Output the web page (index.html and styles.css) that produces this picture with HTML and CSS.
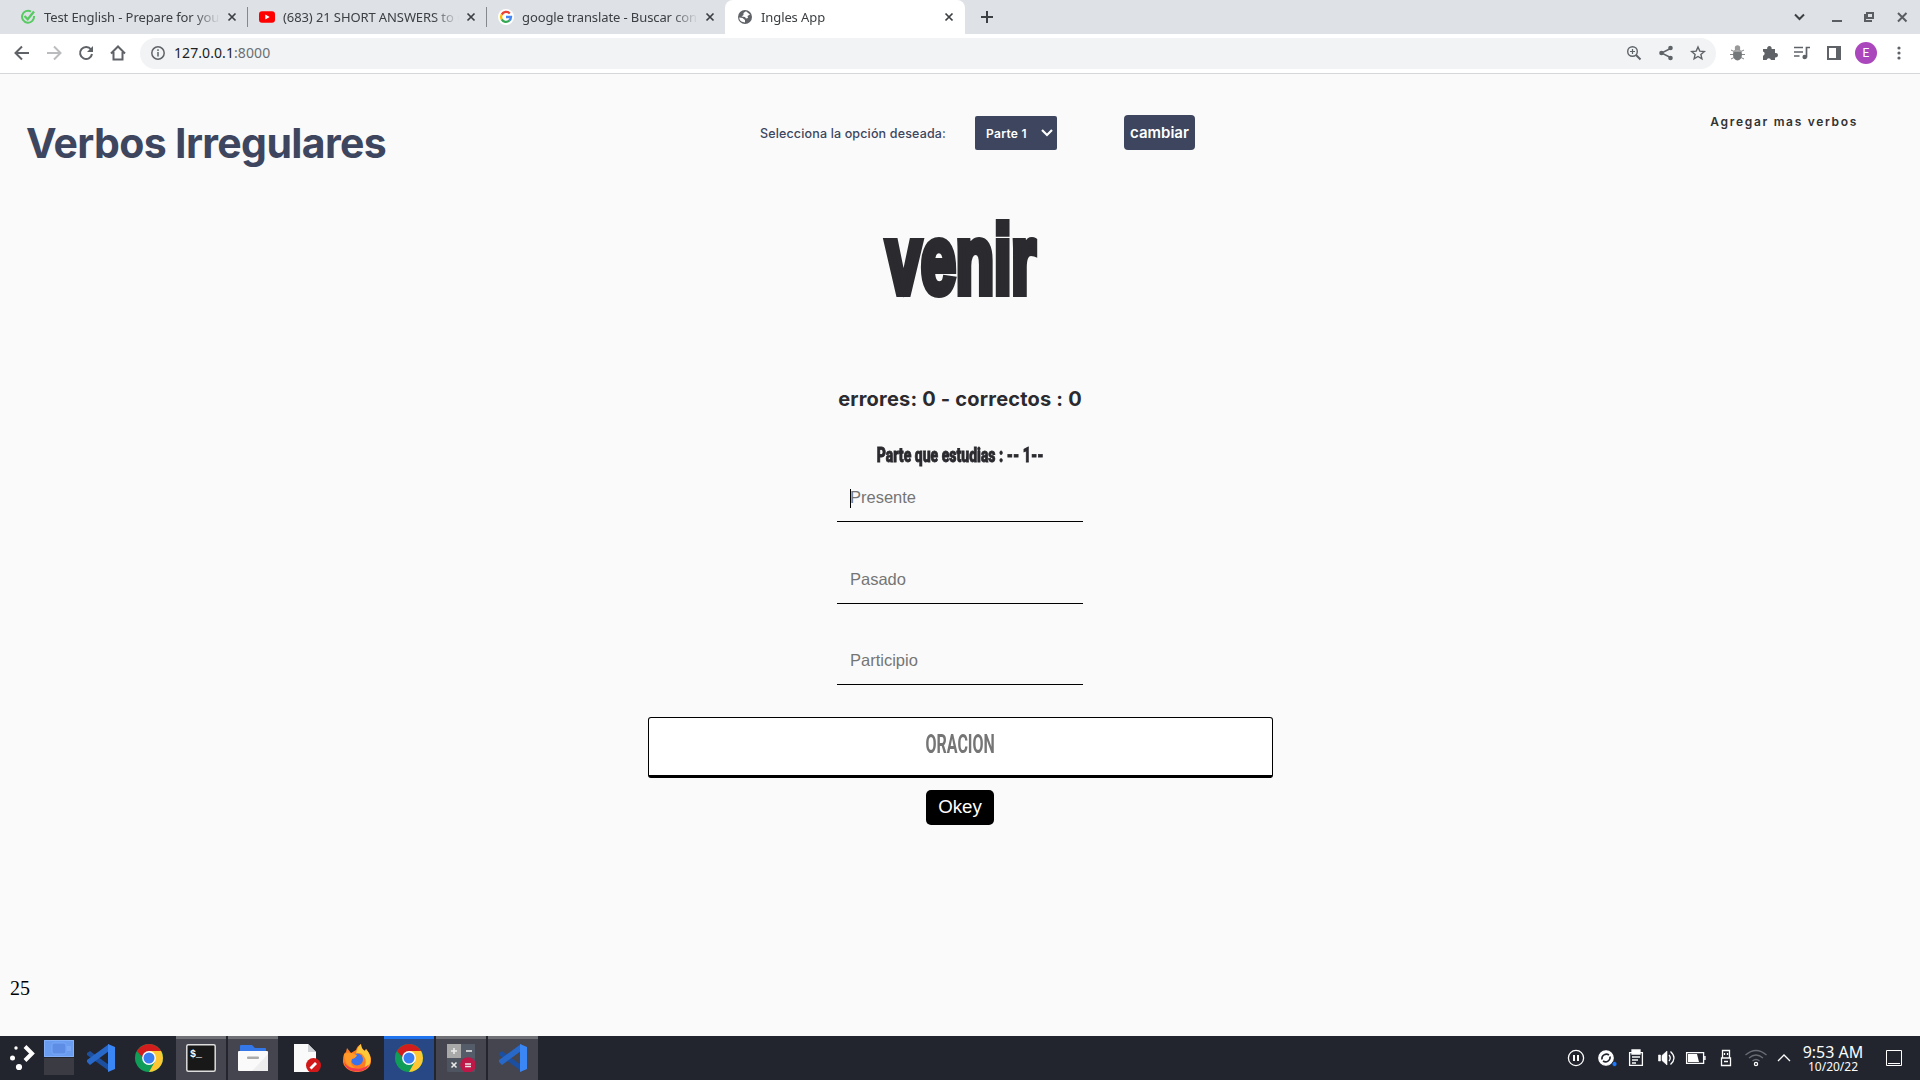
FILE: index.html
```html
<!DOCTYPE html>
<html lang="es">
<head>
<meta charset="utf-8">
<title>Ingles App</title>
<link rel="stylesheet" href="styles.css">
</head>
<body>
<svg class="defs" width="0" height="0">
  <defs>
    <symbol id="x" viewBox="0 0 10 10"><path d="M1.500 1.500l7 7M8.500 1.500l-7 7" stroke="currentColor" stroke-width="1.700" fill="none"/></symbol>
    <symbol id="vscode" viewBox="0 0 28 28"><path d="M0 9l3-2 19 14v6L0 11z" fill="#1c4f9f"/><path d="M0 18l3 3L22 7V0L0 16z" fill="#2868c8"/><path d="M21 0l7 3v22l-7 3z" fill="#3b86f5"/></symbol>
    <symbol id="chrome" viewBox="0 0 28 28"><circle cx="14" cy="14" r="14" fill="#109d58"/><path d="M14 14L1.900 7A14 14 0 0 1 26.100 7z" fill="#d31d1d"/><path d="M14 7h12.100A14 14 0 0 1 14 28l6-10.500z" fill="#ffc832"/><path d="M1.900 7L8 17.500 14 14V7z" fill="#109d58"/><path d="M1.900 7L8 14l6-7z" fill="#d31d1d"/><circle cx="14" cy="14" r="6.900" fill="#fff"/><circle cx="14" cy="14" r="5.500" fill="#3a7df0"/></symbol>
  </defs>
</svg>

<div class="tabs">
  <div class="tab">
    <svg class="fav" viewBox="0 0 16 16"><path d="M14 7a6 6 0 1 1-3-4.500" fill="none" stroke="#57ca62" stroke-width="2"/><path d="M4.500 7l3.200 3.300L14 2.500" fill="none" stroke="#57ca62" stroke-width="2.300"/></svg>
    <span class="tab-text">Test English - Prepare for your e</span><svg class="close"><use href="#x"/></svg>
  </div>
  <div class="tab">
    <svg class="fav" viewBox="0 0 16 16"><rect y="2.300" width="16" height="11.500" rx="3" fill="#f00"/><path d="M6.300 5.500v5l4.400-2.500z" fill="#fff"/></svg>
    <span class="tab-text">(683) 21 SHORT ANSWERS to Qu</span><svg class="close"><use href="#x"/></svg>
  </div>
  <div class="tab tab-last">
    <svg class="fav" viewBox="0 0 16 16"><circle cx="8" cy="8" r="8" fill="#fff"/><g fill="none" stroke-width="2.300"><path d="M11.800 4.500A5 5 0 0 0 3.700 5.600" stroke="#ea4335"/><path d="M3.700 5.500a5 5 0 0 0 0 5" stroke="#fbbc05"/><path d="M3.700 10.400a5 5 0 0 0 7.500 1.300" stroke="#34a853"/><path d="M8 8h5a5 5 0 0 1-1.800 3.700" stroke="#4285f4"/></g></svg>
    <span class="tab-text">google translate - Buscar con G</span><svg class="close"><use href="#x"/></svg>
  </div>
  <div class="tab tab-active">
    <svg class="fav" viewBox="0 0 16 16"><circle cx="8" cy="8" r="7" fill="#5f6368"/><path d="M9 2.200L6.500 4v2L4.500 7.500 8 8l1 1.500L11 9l-.500-2 2.500-1.500M2.200 8.500L5.500 9 8 11v2.500L6 13a5 5 0 0 1-3.800-4.500z" fill="#fff"/></svg>
    <span class="tab-text">Ingles App</span><svg class="close"><use href="#x"/></svg>
  </div>
  <svg class="plus" viewBox="0 0 12 12"><path d="M6 0v12M0 6h12" stroke="#3c4043" stroke-width="2"/></svg>
  <svg class="window-buttons" viewBox="0 0 120 34" fill="none" stroke="#5a5e63" stroke-width="2"><path d="M5 14.500l4.500 4.500 4.500-4.500" stroke="#3c4043"/><path d="M42 21h10"/><path d="M77 13h6v5h-6zM75 14v7h7" /><path d="M108 13l8.500 8.500M116.500 13l-8.500 8.500"/></svg>
</div>

<div class="toolbar">
  <svg class="nav-icons" viewBox="0 0 132 39" fill="none" stroke="#5f6368" stroke-width="2">
    <path d="M29 19H16M22 12.500L15.500 19l6.500 6.500"/><path d="M47 19h13M54 12.500l6.500 6.500-6.500 6.500" stroke="#babcbe"/>
    <path d="M91 15.500A6 6 0 1 0 92 20"/><path d="M93 12v6h-6z" fill="#5f6368" stroke="none"/>
    <path d="M111 19.500l7-7 7 7M113.500 18v7.500h9V18"/>
  </svg>
  <div class="omnibox">
    <svg class="info" viewBox="0 0 14 14" fill="none" stroke="#5f6368" stroke-width="1.500"><circle cx="7" cy="7" r="6.200"/><path d="M7 6v4.500M7 3.300v1.600"/></svg>
    <span class="url">127.0.0.1<i>:8000</i></span>
    <svg class="omni-icons" viewBox="0 0 90 31" fill="none" stroke="#5f6368" stroke-width="1.400">
      <circle cx="12.500" cy="13.500" r="4.800"/><path d="M16 17l4.500 4.500" stroke-width="2"/><path d="M10 13.500h5M12.500 11v5" stroke-width="1.200"/>
      <path d="M50.500 10.500l-9 4.500 9 4.500"/><g fill="#5f6368" stroke="none"><circle cx="50.500" cy="10" r="2.300"/><circle cx="41.500" cy="15" r="2.300"/><circle cx="50.500" cy="20" r="2.300"/></g>
      <path d="M78 9l1.800 4.100 4.500.4-3.400 2.900 1 4.400L78 18.500l-3.900 2.300 1-4.400-3.400-2.900 4.500-.4z"/>
    </svg>
  </div>
  <svg class="ext-icons" viewBox="0 0 128 39">
    <g stroke="#85888a" fill="none"><path d="M9 16l4 2M8 20.500h4M9 25l4-2M22 16l-4 2M23 20.500h-4M22 25l-4-2"/></g><ellipse cx="15.500" cy="20.500" rx="4.500" ry="6" fill="#75787a"/><circle cx="15.500" cy="14" r="2.700" fill="#999"/><path d="M11.500 17h8" stroke="#ccc"/>
    <path d="M41 15h4.200a2.300 2.300 0 1 1 4.400 0H53v4a2.300 2.300 0 1 1 0 4.400V26h-4a2.300 2.300 0 0 0-4.400 0H41v-4.200a2.300 2.300 0 0 0 0-4.400z" fill="#5f6368"/>
    <g stroke="#5f6368" stroke-width="1.700" fill="none"><path d="M72 13.500h9M72 18h9M72 22h5.500M84.500 23.500v-10H88"/></g><circle cx="82.700" cy="23" r="2.300" fill="#5f6368"/>
    <path d="M105 12h14v14h-14zM107 14v10h7V14z" fill-rule="evenodd" fill="#5f6368"/>
  </svg>
  <span class="avatar">E</span>
  <svg class="dots" viewBox="0 0 4 14" fill="#5f6368"><circle cx="2" cy="2" r="1.600"/><circle cx="2" cy="7" r="1.600"/><circle cx="2" cy="12" r="1.600"/></svg>
</div>

<div class="page">
  <header class="header">
    <span class="brand">Verbos Irregulares</span>
    <form class="picker">
      <label class="picker-label">Selecciona la opción deseada:</label>
      <div class="select"><span>Parte 1</span><svg viewBox="0 0 12 8" class="caret-down"><path d="M1 1l5 5 5-5" fill="none" stroke="#fff" stroke-width="2.200"/></svg></div>
      <button type="button" class="change">cambiar</button>
    </form>
    <a class="link">Agregar mas verbos</a>
  </header>
  <main class="quiz">
    <h1 class="verb"><span class="verb-text">venir</span></h1>
    <h3 class="score">errores: 0 - correctos : 0</h3>
    <h4 class="part"><span class="part-text">Parte que estudias : -- 1--</span></h4>
    <div class="field field-focus"><input class="input" placeholder="Presente"></div>
    <div class="field"><input class="input" placeholder="Pasado"></div>
    <div class="field"><input class="input" placeholder="Participio"></div>
    <div class="sentence"><span class="sentence-text">ORACION</span></div>
    <button type="button" class="okey">Okey</button>
  </main>
  <p class="count">25</p>
</div>

<footer class="taskbar">
  <svg class="launcher" viewBox="0 0 44 44" fill="#fff"><circle cx="16" cy="12" r="1.700"/><circle cx="12.500" cy="22" r="2.500"/><circle cx="19" cy="31" r="3.100"/><path d="M25 10.500l7 7-7 7" fill="none" stroke="#fff" stroke-width="4"/></svg>
  <svg class="pager" viewBox="0 0 30 36"><path d="M0 0h30v17H0z" fill="#6a9cf0"/><path d="M.500.500h29v16H.500z" fill="none" stroke="#84b0fa"/><rect x="8" y="3" width="14" height="11" rx="2" fill="#5d8de4" stroke="#79a7f5"/><path d="M23 6h4v5h-4z" fill="#79a7f5"/><path d="M0 18h30v17H0z" fill="#3b3b44"/></svg>
  <div class="app app-vs"><svg class="app-icon"><use href="#vscode"/></svg></div>
  <div class="app app-chrome"><svg class="app-icon"><use href="#chrome"/></svg></div>
  <div class="app open"><svg class="term" viewBox="0 0 30 28"><rect x=".800" y=".800" width="28.400" height="26.400" rx="1.500" fill="#181818" stroke="#ddd" stroke-width="1.500"/><text x="4" y="13" class="term-text">$_</text></svg></div>
  <div class="app open"><svg class="term" viewBox="0 0 30 28"><path d="M2 2q0-1 1-1h11l3 3h10q1 0 1 1v5H2z" fill="#3477e8"/><rect y="7" width="30" height="20" rx="1" fill="#fafafa"/><path d="M30 10v17H14z" fill="#eee"/><rect x="9" y="12.500" width="12" height="2.500" rx="1" fill="#aaa"/></svg></div>
  <div class="app app-file"><svg class="app-icon" viewBox="0 0 28 28"><path d="M1 0h14l8 8v20H1z" fill="#fafafa"/><path d="M15 0l8 8h-8z" fill="#cfd3d8"/><circle cx="20.500" cy="21.500" r="7.500" fill="#d21919"/><path d="M17.500 24.500l5.500-5.500" stroke="#fff" stroke-width="2.800"/></svg></div>
  <div class="app"><svg class="app-icon" viewBox="0 0 28 28"><path d="M4 4l4 5 5-3q1-4 5-6 0 5 4 7l1-2q6 7 5 13a14 11 0 0 1-28-2q0-6 3-8z" fill="#ff7b22"/><path d="M18 0q0 5 4 7l1-2q6 7 4 14-2 5-7 7 6-9-1-16-3-2-6 0 1-7 5-10z" fill="#ffc83a"/><circle cx="14" cy="15.500" r="6" fill="#3a72ee"/><path d="M1 10q5-3 13 1-1 3-5 4-3 6 3 9Q2 24 1 10z" fill="#ff9928"/><path d="M1 18q2 9 13 9.500 9 0 12-7-6 5-13 4-8 0-12-6.500z" fill="#f23c50"/></svg></div>
  <div class="app open active"><svg class="app-icon"><use href="#chrome"/></svg></div>
  <div class="app open"><svg class="app-icon" viewBox="0 0 28 28"><rect width="28" height="28" rx="1.500" fill="#4e5560"/><path d="M0 0h14v14H0z" fill="#a8a8a8"/><path d="M14 0h14v14H14z" fill="#555c69"/><circle cx="21" cy="21" r="7.800" fill="#bd1848"/><path d="M7 4v6M4 7h6M19 7h6M4.500 18.500l5 5M9.500 18.500l-5 5M18 20h6M18 22.500h6" stroke="#e9e9e9" stroke-width="1.600"/></svg></div>
  <div class="app open"><svg class="app-icon"><use href="#vscode"/></svg></div>
  <svg class="tray" viewBox="0 0 240 44" fill="none" stroke="#fcfcfc" stroke-width="1.300">
    <circle cx="16" cy="22" r="7.600"/><path d="M14 19v6M18 19v6" stroke-width="2"/>
    <circle cx="46" cy="22" r="7.200" fill="#fff"/><path d="M42 23.500a4.500 4.500 0 0 1 7-4.500M50 20.500a4.500 4.500 0 0 1-7 4.500" stroke="#22252e" stroke-width="1.600"/><circle cx="54.500" cy="28" r="2.500" fill="#1d7aff" stroke="#22252e" stroke-width=".8"/>
    <path d="M69.600 16.600h12.800v12.800H69.600z"/><path d="M72 14h8v4h-8z" fill="#fff"/><path d="M72 21h8M72 24h6M72 27h4"/>
    <path d="M98.500 19v6h2v-6zM102 19.500v5l5 4.500V15z" fill="#fff" stroke-width=".6"/><path d="M109 19q2.500 3 0 6M110.500 15.500q7 6.500 0 13"/>
    <path d="M126.600 16.600h17v10.800h-17zM145 20v4"/><path d="M128 18h9l2 8h-11z" fill="#fff" stroke="none"/>
    <path d="M162.500 14.500h7V22h-7zM161.500 22h9v7.500h-9zM164 25.500h4M164.500 17v2M167.500 17v2"/>
    <g stroke="#696c73"><path d="M185.500 19q10.500-9 21 0M189 22q7-6 14 0M192.500 25q3.500-3 7 0"/></g><circle cx="196" cy="28" r="1.600"/>
    <path d="M218 25l6-6 6 6"/>
  </svg>
  <div class="clock"><span class="time">9:53 AM</span><span class="date">10/20/22</span></div>
  <svg class="desktop" viewBox="0 0 16 16" fill="none" stroke="#fff"><path d="M.500.500h15v15H.500zM2 13.500h12"/></svg>
</footer>
</body>
</html>
```

FILE: styles.css
```css
* { box-sizing: border-box; }
body {
  margin: 0;
  width: 1920px;
  height: 1080px;
  overflow: hidden;
  display: flex;
  flex-direction: column;
  background: #fafafa;
  font-family: "Noto Sans", sans-serif;
}
svg { flex: none; display: block; }
.defs { position: absolute; }

/* Browser tabs */
.tabs {
  height: 34px;
  flex: none;
  display: flex;
  align-items: center;
  background: #dee1e6;
  padding-left: 9px;
}
.tab {
  width: 239px;
  height: 20px;
  display: flex;
  align-items: center;
  padding-left: 11px;
  border-right: 1px solid #85888c;
  font-size: 13px;
  letter-spacing: -.100px;
  color: #3c4043;
}
.tab-last { width: 238px; border: 0; }
.tab-active {
  width: 240px;
  height: 34px;
  padding-left: 12px;
  background: #fff;
  border: 0;
  border-radius: 8px 8px 0 0;
}
.fav { width: 16px; height: 16px; margin-right: 8px; }
.tab-text {
  width: 176px;
  line-height: 20px;
  overflow: hidden;
  white-space: nowrap;
  mask-image: linear-gradient(90deg, #000 150px, transparent 176px);
}
.close { width: 10px; height: 10px; margin-left: 7px; }
.plus { width: 12px; height: 12px; margin-left: 16px; }
.window-buttons { width: 120px; height: 34px; margin-left: auto; margin-right: 10px; }

/* Address bar */
.toolbar {
  height: 40px;
  flex: none;
  display: flex;
  align-items: center;
  background: #fff;
  border-bottom: 1px solid #d5d8db;
}
.nav-icons { width: 132px; height: 39px; }
.omnibox {
  width: 1576px;
  height: 31px;
  margin-left: 8px;
  border-radius: 16px;
  background: #f1f3f4;
  display: flex;
  align-items: center;
  padding-left: 11px;
}
.info { width: 14px; height: 14px; margin-bottom: 1px; }
.url { margin: 0 0 2px 9px; font-size: 14px; letter-spacing: .080px; color: #202124; }
.url i { font-style: normal; color: #6b6f73; }
.omni-icons { width: 90px; height: 31px; margin-left: auto; margin-right: 6px; }
.ext-icons { width: 128px; height: 39px; margin-left: 6px; }
.avatar {
  width: 22px;
  height: 22px;
  margin: 0 0 1px 5px;
  border-radius: 50%;
  background: #ab47bc;
  color: #fff;
  font: 12px/22px Roboto, sans-serif;
  text-align: center;
}
.dots { width: 4px; height: 14px; margin: 0 0 1px 20px; }

/* Web page */
.page {
  height: 962px;
  flex: none;
  display: flex;
  flex-direction: column;
  font-family: Inter, sans-serif;
}
.header {
  height: 137px;
  display: grid;
  grid-template-columns: 734px 1fr auto;
  padding: 41px 60px 0 26px;
  align-items: start;
}
.brand {
  color: #3d465e;
  font-size: 41px;
  line-height: 56px;
  font-weight: 700;
  letter-spacing: -.640px;
}
.picker { display: flex; align-items: center; height: 35px; }
.picker-label { width: 215px; padding-top: 1px; font-size: 12.500px; font-weight: 500; letter-spacing: .150px; color: #3d465e; }
.select {
  width: 82px;
  height: 34px;
  border-radius: 2px;
  background: #3d465e;
  color: #fff;
  font-size: 12px;
  font-weight: 600;
  letter-spacing: .300px;
  display: flex;
  align-items: center;
  justify-content: space-between;
  padding: 1px 4px 0 11px;
}
.caret-down { width: 12px; height: 8px; }
.change {
  width: 71px;
  height: 35px;
  margin-left: 67px;
  padding: 0;
  border: 0;
  border-radius: 4px;
  background: #3d465e;
  color: #fff;
  font: 600 15px Inter, sans-serif;
}
.link { padding: 0 2px; font-size: 12px; line-height: 14px; font-weight: 600; letter-spacing: 1.680px; color: #333; }
.quiz { display: flex; flex-direction: column; align-items: center; color: #2a2a2f; }
.verb { margin: 0; font: 700 97px/98px "Liberation Sans", sans-serif; height: 100px; }
.verb-text { display: inline-block; transform: translateX(1px) scaleX(.645); -webkit-text-stroke: 8px #2a2a2f; }
.score { margin: 73px 0 0; font-size: 20px; line-height: 30px; font-weight: 700; letter-spacing: .200px; }
.part { margin: 29px 0 10px; height: 24px; font: 900 20px/24px Roboto, sans-serif; }
.part-text { display: inline-block; transform: scaleX(.700); white-space: nowrap; -webkit-text-stroke: .800px #2a2a2f; }
.field { position: relative; width: 246px; height: 45px; margin-bottom: 36.700px; border-bottom: 1px solid #000; }
.field-focus::before { content: ""; position: absolute; left: 13px; top: 12px; width: 1px; height: 19px; background: #000; }
.input {
  display: block;
  width: 100%;
  height: 41.200px;
  padding: 0 13px;
  border: 0;
  background: transparent;
  font: 16.500px/20px "Liberation Sans", sans-serif;
}
.input::placeholder { color: #757575; }
.sentence {
  width: 625px;
  height: 61px;
  margin: -5px 0 0 1px;
  border: 1px solid #000;
  border-bottom-width: 3px;
  border-radius: 3px;
  background: #fff;
  text-align: center;
  font: 700 25px/54px Roboto, sans-serif;
  color: #757575;
}
.sentence-text { display: inline-block; transform: scaleX(.640); }
.okey {
  width: 68px;
  height: 35px;
  margin-top: 12px;
  padding: 0 0 1px;
  border: 0;
  border-radius: 5px;
  background: #000;
  color: #fff;
  font: 18.700px "Liberation Sans", sans-serif;
}
.count { margin: auto 0 36px 10px; font: 20px/24px "Liberation Serif", serif; color: #000; }

/* Desktop panel */
.taskbar { height: 44px; flex: none; display: flex; align-items: center; background: #22252e; }
.launcher { width: 44px; height: 44px; }
.pager { width: 30px; height: 36px; }
.app { width: 50px; height: 44px; margin-right: 2px; display: flex; align-items: center; justify-content: center; }
.app-vs { width: 54px; margin-right: 0; }
.app-chrome { width: 42px; margin-right: 6px; }
.app-file { padding-left: 4px; }
.app-icon { width: 28px; height: 28px; }
.term { width: 30px; height: 28px; }
.term-text { font: bold 10px "Liberation Mono", monospace; fill: #fff; }
.open { background: #44454e; border-top: 3px solid #6e7075; padding-bottom: 3px; }
.active { background: #274785; border-top-color: #1f74ee; }
.tray { width: 240px; height: 44px; margin-left: auto; }
.clock { width: 66px; display: flex; flex-direction: column; align-items: center; color: #fcfcfc; }
.time { font-size: 16px; line-height: 16px; white-space: nowrap; }
.date { font-size: 12px; line-height: 13px; }
.desktop { width: 16px; height: 16px; margin: 0 18px 0 20px; }
```
